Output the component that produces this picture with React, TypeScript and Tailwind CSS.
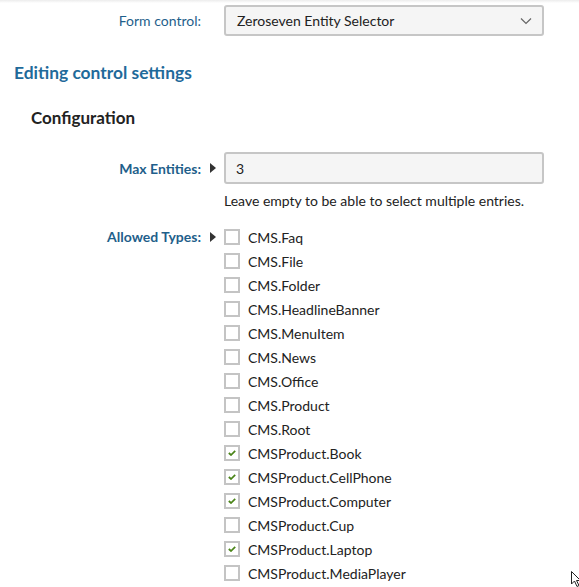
import React from "react";

const types: [string, boolean][] = [
  ["CMS.Faq", false],
  ["CMS.File", false],
  ["CMS.Folder", false],
  ["CMS.HeadlineBanner", false],
  ["CMS.MenuItem", false],
  ["CMS.News", false],
  ["CMS.Office", false],
  ["CMS.Product", false],
  ["CMS.Root", false],
  ["CMSProduct.Book", true],
  ["CMSProduct.CellPhone", true],
  ["CMSProduct.Computer", true],
  ["CMSProduct.Cup", false],
  ["CMSProduct.Laptop", true],
  ["CMSProduct.MediaPlayer", false],
];

function Arrow() {
  return (
    <svg width="6" height="10" viewBox="0 0 6 10" className="block">
      <path d="M0 0 L6 5 L0 10 Z" fill="#333" />
    </svg>
  );
}

function Box({ checked }: { checked: boolean }) {
  return (
    <span className="w-4 h-4 border-2 border-[#c4c4c4] bg-white flex items-center justify-center shrink-0">
      {checked && (
        <svg width="8" height="6" viewBox="0 0 8 6">
          <path d="M0.8 3 L3 5 L7.2 0.8" stroke="#4a8418" strokeWidth="1.7" fill="none" />
        </svg>
      )}
    </span>
  );
}

export default function App() {
  return (
    <div
      className="w-[579px] h-[587px] overflow-hidden bg-white text-[14px] text-[#333] relative"
      style={{ fontFamily: '"Segoe UI", Lato, "Open Sans", sans-serif' }}
    >
      <div className="h-[3px] bg-gradient-to-b from-[#ececec] to-white" />
      <div className="flex items-center mt-[2px]">
        <div className="w-[201px] text-right text-[#1f5f8b]">Form control:</div>
        <div className="ml-[23px] w-[320px] h-[31px] border-2 border-[#c6c6c6] rounded-[3px] bg-[#f5f5f5] flex items-center justify-between pl-[11px] pr-[10px] text-[#222]">
          <span>Zeroseven Entity Selector</span>
          <svg width="12" height="8" viewBox="0 0 12 8">
            <path d="M1 1.5 L6 6.5 L11 1.5" stroke="#666" strokeWidth="1.2" fill="none" />
          </svg>
        </div>
      </div>
      <div className="ml-[14px] mt-[24px] text-[17.4px] font-bold text-[#1f6a9a] leading-[26px]">
        Editing control settings
      </div>
      <div className="ml-[31px] mt-[21px] text-[17px] font-bold text-[#222] leading-[22px]">
        Configuration
      </div>
      <div className="flex items-center mt-[23px]">
        <div className="w-[201px] text-right text-[#1f5f8b] font-bold">Max Entities:</div>
        <div className="w-[23px] flex justify-center">
          <Arrow />
        </div>
        <div className="w-[320px] h-[32px] border-2 border-[#c6c6c6] rounded-[3px] bg-[#f5f5f5] flex items-center pl-[10px] text-[#222]">
          3
        </div>
      </div>
      <div className="ml-[224px] mt-[6px] text-[#222]">Leave empty to be able to select multiple entries.</div>
      <div className="flex mt-[14px]">
        <div className="w-[201px] text-right text-[#1f5f8b] font-bold leading-[24px]">Allowed Types:</div>
        <div className="w-[23px] flex justify-center pt-[7px]">
          <Arrow />
        </div>
        <div className="flex flex-col">
          {types.map(([name, checked]) => (
            <div key={name} className="flex items-center h-[24px] gap-[8px] text-[#222]">
              <Box checked={checked} />
              <span>{name}</span>
            </div>
          ))}
        </div>
      </div>
      <svg className="absolute left-[571px] top-[571px]" width="10" height="16" viewBox="0 0 10 16">
        <path d="M0.5 0.5 L0.5 13 L3.5 10 L6 15.5 L8 14.5 L5.5 9.5 L9.5 9.5 Z" fill="white" stroke="#222" strokeWidth="1" />
      </svg>
    </div>
  );
}
